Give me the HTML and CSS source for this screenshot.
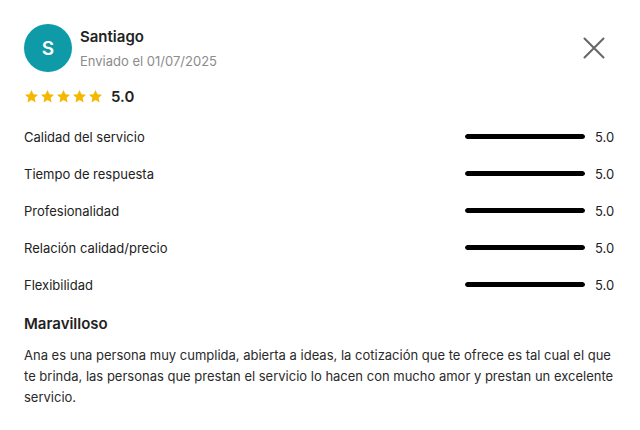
FILE: index.html
```html
<!DOCTYPE html>
<html lang="es">
<head>
<meta charset="utf-8">
<link rel="stylesheet" href="styles.css">
</head>
<body>
<div class="card">
  <div class="header">
    <div class="avatar">S</div>
    <div class="who">
      <div class="name">Santiago</div>
      <div class="date">Enviado el 01/07/2025</div>
    </div>
    <button class="close" aria-label="Cerrar">
      <svg width="22" height="22" viewBox="0 0 22 22"><path d="M1.5 1.5 L20.5 20.5 M20.5 1.5 L1.5 20.5" stroke="#666" stroke-width="2" stroke-linecap="round" fill="none"/></svg>
    </button>
  </div>
  <div class="overall">
    <div class="stars">
      <svg class="star" viewBox="0 0 24 24"><path d="M12 1.5l3.1 6.9 7.4.7-5.6 5 1.7 7.4L12 17.6l-6.6 3.9 1.7-7.4-5.6-5 7.4-.7z"/></svg>
      <svg class="star" viewBox="0 0 24 24"><path d="M12 1.5l3.1 6.9 7.4.7-5.6 5 1.7 7.4L12 17.6l-6.6 3.9 1.7-7.4-5.6-5 7.4-.7z"/></svg>
      <svg class="star" viewBox="0 0 24 24"><path d="M12 1.5l3.1 6.9 7.4.7-5.6 5 1.7 7.4L12 17.6l-6.6 3.9 1.7-7.4-5.6-5 7.4-.7z"/></svg>
      <svg class="star" viewBox="0 0 24 24"><path d="M12 1.5l3.1 6.9 7.4.7-5.6 5 1.7 7.4L12 17.6l-6.6 3.9 1.7-7.4-5.6-5 7.4-.7z"/></svg>
      <svg class="star" viewBox="0 0 24 24"><path d="M12 1.5l3.1 6.9 7.4.7-5.6 5 1.7 7.4L12 17.6l-6.6 3.9 1.7-7.4-5.6-5 7.4-.7z"/></svg>
    </div>
    <span class="score">5.0</span>
  </div>
  <div class="ratings">
    <div class="row"><span class="label">Calidad del servicio</span><span class="bar"><span class="fill" style="width:100%"></span></span><span class="val">5.0</span></div>
    <div class="row"><span class="label">Tiempo de respuesta</span><span class="bar"><span class="fill" style="width:100%"></span></span><span class="val">5.0</span></div>
    <div class="row"><span class="label">Profesionalidad</span><span class="bar"><span class="fill" style="width:100%"></span></span><span class="val">5.0</span></div>
    <div class="row"><span class="label">Relación calidad/precio</span><span class="bar"><span class="fill" style="width:100%"></span></span><span class="val">5.0</span></div>
    <div class="row"><span class="label">Flexibilidad</span><span class="bar"><span class="fill" style="width:100%"></span></span><span class="val">5.0</span></div>
  </div>
  <h2 class="title">Maravilloso</h2>
  <p class="text">Ana es una persona muy cumplida, abierta a ideas, la cotización que te ofrece es tal cual el que te brinda, las personas que prestan el servicio lo hacen con mucho amor y prestan un excelente servicio.</p>
</div>
</body>
</html>
```
FILE: styles.css
```css
* { box-sizing: border-box; }
html, body { margin: 0; padding: 0; background: #fff; }
body { font-family: "Inter", "Liberation Sans", sans-serif; color: #222; }
.card { width: 640px; padding: 24px 24px 0 24px; }
.header { display: flex; align-items: flex-start; }
.avatar {
  width: 48px; height: 48px; border-radius: 50%;
  background: #0e9aa7; color: #fff;
  display: flex; align-items: center; justify-content: center;
  font-size: 19px; font-weight: 600;
}
.who { margin-left: 8px; flex: 1; padding-top: 3px; }
.name { font-size: 15px; font-weight: 600; color: #222; line-height: 20px; }
.date { font-size: 13px; color: #8c8c8c; line-height: 20px; margin-top: 4px; }
.close { border: 0; background: none; padding: 0; margin: 13px 11px 0 0; width: 22px; height: 22px; cursor: pointer; }
.close svg { display: block; }
.overall { display: flex; align-items: center; margin-top: 14px; height: 20px; }
.stars { display: flex; gap: 1px; }
.star { width: 15px; height: 15px; fill: #f5b800; display: block; }
.score { margin-left: 8px; font-size: 15px; font-weight: 600; color: #222; }
.ratings { margin-top: 12px; }
.row { display: flex; align-items: center; height: 37px; font-size: 13px; color: #222; }
.label { flex: 1; }
.bar { width: 120px; height: 5px; border-radius: 3px; background: #e6e6e6; overflow: hidden; display: block; }
.fill { display: block; height: 100%; background: #000; border-radius: 3px; }
.val { width: 31px; padding-left: 10px; }
.title { margin: 11px 0 0 0; font-size: 15px; font-weight: 600; color: #222; line-height: 20px; }
.text { margin: 11px 0 0 0; font-size: 13px; line-height: 21px; color: #2a2a2a; }
```
